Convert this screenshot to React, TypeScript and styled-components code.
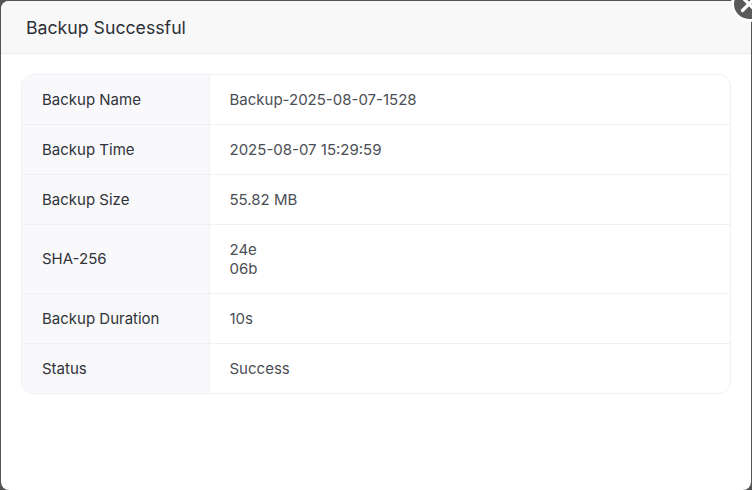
import React from "react";
import styled, { createGlobalStyle } from "styled-components";
import { X } from "lucide-react";

const rows = [
  { label: "Backup Name", value: ["Backup-2025-08-07-1528"] },
  { label: "Backup Time", value: ["2025-08-07 15:29:59"] },
  { label: "Backup Size", value: ["55.82 MB"] },
  { label: "SHA-256", value: ["24e", "06b"] },
  { label: "Backup Duration", value: ["10s"] },
  { label: "Status", value: ["Success"] },
];

function App() {
  return (
    <Backdrop>
      <GlobalStyle />
      <Modal>
        <Header>
          <Title>Backup Successful</Title>
        </Header>
        <Body>
          <Table>
            {rows.map((row) => (
              <Row key={row.label}>
                <Label>{row.label}</Label>
                <Value>
                  {row.value.map((line) => (
                    <div key={line}>{line}</div>
                  ))}
                </Value>
              </Row>
            ))}
          </Table>
        </Body>
      </Modal>
      <CloseButton>
        <X size={26} strokeWidth={3} color="#fff" />
      </CloseButton>
    </Backdrop>
  );
}

export default App;

const GlobalStyle = createGlobalStyle`
  html, body {
    margin: 0;
    padding: 0;
    overflow: hidden;
  }
  body {
    font-family: Inter, "Liberation Sans", sans-serif;
  }
`;

const Backdrop = styled.div`
  position: relative;
  width: 752px;
  height: 490px;
  padding: 1px 1px 0 1px;
  box-sizing: border-box;
  background: #545454;
  overflow: hidden;
`;

const Modal = styled.div`
  height: 489px;
  background: #fff;
  border-radius: 8px;
  overflow: hidden;
`;

const Header = styled.div`
  height: 52px;
  display: flex;
  align-items: center;
  padding: 0 25px;
  background: #f8f8f8;
  border-bottom: 1px solid #ededed;
`;

const Title = styled.div`
  font-size: 17.7px;
  font-weight: 400;
  color: #2c2f36;
`;

const Body = styled.div`
  padding: 20px;
`;

const Table = styled.div`
  border: 1px solid #eff0f3;
  border-radius: 12px;
  overflow: hidden;
`;

const Row = styled.div`
  display: flex;
  border-bottom: 1px solid #eff0f3;
  &:last-child {
    border-bottom: none;
  }
`;

const Label = styled.div`
  flex: none;
  width: 147px;
  padding: 15px 20px;
  display: flex;
  align-items: center;
  background: #f9f9fb;
  border-right: 1px solid #eff0f3;
  font-size: 15px;
  line-height: 18px;
  color: #303339;
`;

const Value = styled.div`
  flex: 1;
  padding: 15px 19.5px;
  font-size: 15px;
  line-height: 19px;
  color: #4b4e55;
`;

const CloseButton = styled.button`
  position: absolute;
  top: -14px;
  right: -15px;
  width: 36px;
  height: 36px;
  padding: 0;
  display: flex;
  align-items: center;
  justify-content: center;
  border: 3px solid #fff;
  border-radius: 50%;
  background: #5a5a5a;
`;
